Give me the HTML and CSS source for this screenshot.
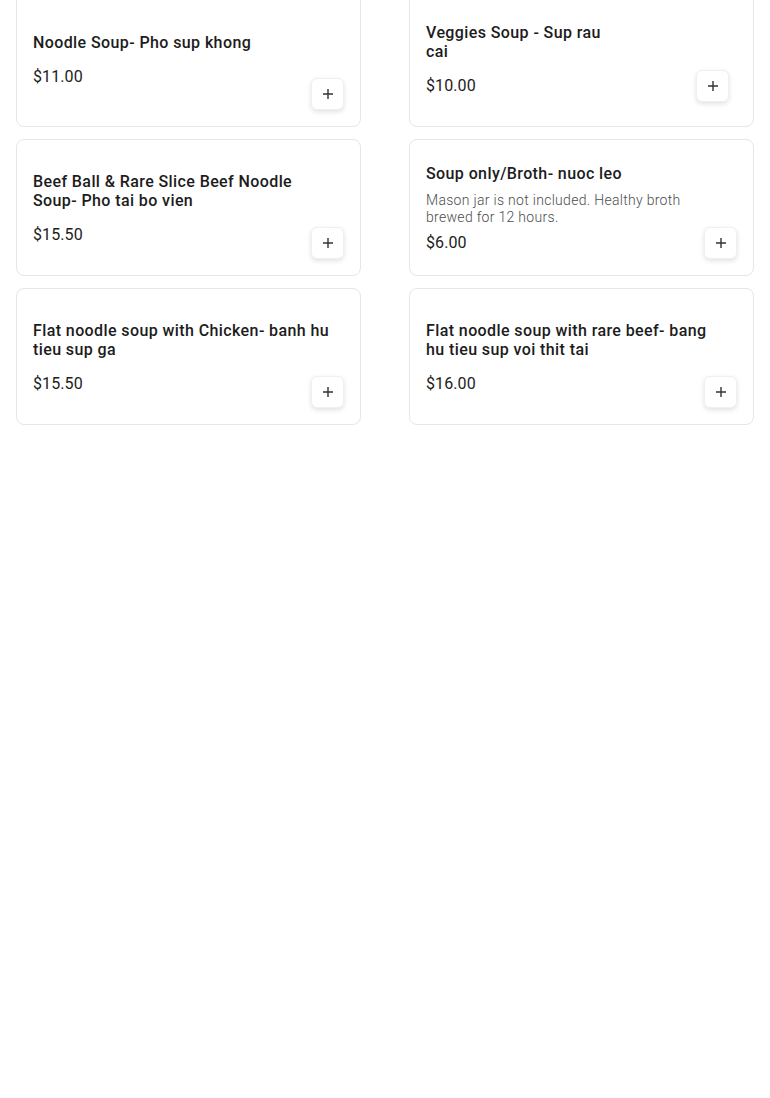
FILE: index.html
```html
<!DOCTYPE html>
<html>
<head>
<meta charset="utf-8">
<link rel="stylesheet" href="styles.css">
</head>
<body>
<div class="menu">
  <div class="card">
    <div class="info">
      <div class="title">Noodle Soup- Pho sup khong</div>
      <div class="price">$11.00</div>
    </div>
    <button class="add"><svg viewBox="0 0 12 12" width="12" height="12"><path d="M6 1v10M1 6h10" stroke="#333" stroke-width="1.4"/></svg></button>
  </div>
  <div class="card card-alt">
    <div class="info">
      <div class="title title-narrow">Veggies Soup - Sup rau cai</div>
      <div class="price">$10.00</div>
    </div>
    <button class="add"><svg viewBox="0 0 12 12" width="12" height="12"><path d="M6 1v10M1 6h10" stroke="#333" stroke-width="1.4"/></svg></button>
  </div>
  <div class="card">
    <div class="info">
      <div class="title">Beef Ball &amp; Rare Slice Beef Noodle Soup- Pho tai bo vien</div>
      <div class="price">$15.50</div>
    </div>
    <button class="add"><svg viewBox="0 0 12 12" width="12" height="12"><path d="M6 1v10M1 6h10" stroke="#333" stroke-width="1.4"/></svg></button>
  </div>
  <div class="card">
    <div class="info">
      <div class="title">Soup only/Broth- nuoc leo</div>
      <div class="desc">Mason jar is not included. Healthy broth brewed for 12 hours.</div>
      <div class="price">$6.00</div>
    </div>
    <button class="add"><svg viewBox="0 0 12 12" width="12" height="12"><path d="M6 1v10M1 6h10" stroke="#333" stroke-width="1.4"/></svg></button>
  </div>
  <div class="card">
    <div class="info">
      <div class="title">Flat noodle soup with Chicken- banh hu tieu sup ga</div>
      <div class="price">$15.50</div>
    </div>
    <button class="add"><svg viewBox="0 0 12 12" width="12" height="12"><path d="M6 1v10M1 6h10" stroke="#333" stroke-width="1.4"/></svg></button>
  </div>
  <div class="card">
    <div class="info">
      <div class="title">Flat noodle soup with rare beef- bang hu tieu sup voi thit tai</div>
      <div class="price">$16.00</div>
    </div>
    <button class="add"><svg viewBox="0 0 12 12" width="12" height="12"><path d="M6 1v10M1 6h10" stroke="#333" stroke-width="1.4"/></svg></button>
  </div>
</div>
</body>
</html>
```
FILE: styles.css
```css
html, body {
  margin: 0;
  padding: 0;
  background: #fff;
}
body {
  font-family: Roboto, "Liberation Sans", sans-serif;
  color: #1c1c1c;
}
.menu {
  display: grid;
  grid-template-columns: 345px 345px;
  column-gap: 48px;
  row-gap: 12px;
  padding: 0 16px;
  margin-top: -10px;
}
.card {
  box-sizing: border-box;
  min-height: 137px;
  border: 1px solid #e6e6e6;
  border-radius: 8px;
  padding: 16px;
  display: grid;
  grid-template-columns: 1fr;
  grid-template-rows: 1fr;
}
.info {
  grid-area: 1 / 1;
  align-self: center;
  padding-right: 14px;
  padding-top: 1px;
}
.title {
  font-size: 16px;
  font-weight: 500;
  line-height: 19px;
  letter-spacing: 0.4px;
  color: #1c1c1c;
}
.title-narrow {
  max-width: 190px;
}
.desc {
  font-size: 14px;
  font-weight: 300;
  line-height: 17px;
  letter-spacing: 0.3px;
  color: #4d4d4d;
  margin-top: 9px;
}
.price {
  font-size: 16px;
  line-height: 19px;
  letter-spacing: 0.1px;
  color: #1c1c1c;
  margin-top: 15px;
}
.desc + .price {
  margin-top: 7px;
}
.add {
  grid-area: 1 / 1;
  align-self: end;
  justify-self: end;
  width: 33px;
  height: 32px;
  padding: 0;
  border: 1px solid #f0f0f0;
  border-radius: 6px;
  background: #fff;
  box-shadow: 0 2px 5px rgba(0, 0, 0, 0.12);
  display: flex;
  align-items: center;
  justify-content: center;
  cursor: pointer;
}
.card-alt .add {
  margin: 0 8px 8px 0;
}
```
